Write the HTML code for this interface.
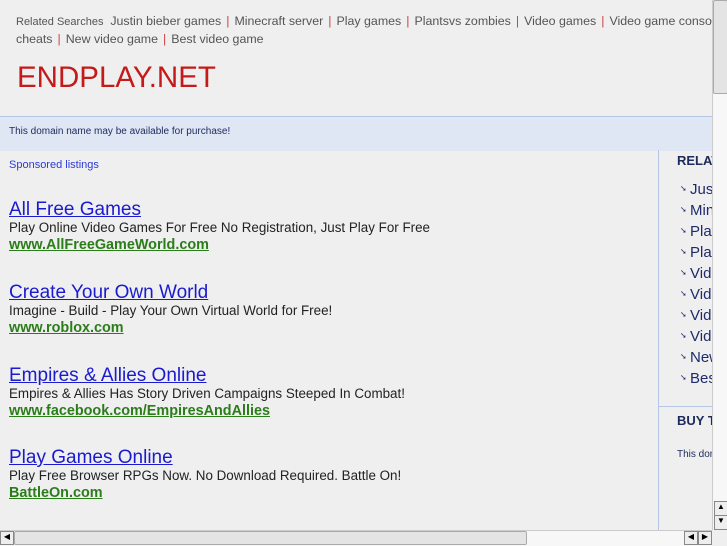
<!DOCTYPE html><html><head><style>
body{margin:0;width:727px;height:545px;overflow:hidden;background:#efefef;font-family:"Liberation Sans",sans-serif;position:relative}
.a{position:absolute;white-space:nowrap}
.rs{color:#555;font-size:12.4px}
.sep{color:#c44;margin:0 5px}
.t{font-size:19px;color:#1a1ad0;text-decoration:underline}
.d{font-size:13.4px;color:#222}
.u{font-size:14.4px;color:#2b7d1a;font-weight:bold;text-decoration:underline}
.r{font-size:15px;color:#1d2a6b;left:690px}
.ar{position:absolute;left:680px;font-size:8px;color:#1d2a6b}
</style></head><body>
<div class="a rs" style="left:16px;top:14px"><span style="font-size:11px">Related Searches</span> &nbsp;Justin bieber games<span class="sep">|</span>Minecraft server<span class="sep">|</span>Play games<span class="sep">|</span>Plantsvs zombies<span class="sep">|</span>Video games<span class="sep">|</span>Video game console</div>
<div class="a rs" style="left:16px;top:32px">cheats<span class="sep">|</span>New video game<span class="sep">|</span>Best video game</div>
<div class="a" style="left:17px;top:61px;font-size:29.5px;color:#c41a1a">ENDPLAY.NET</div>
<div class="a" style="left:0;top:116px;width:712px;height:34px;background:#dfe6f4;border-top:1px solid #b5c6e6"></div>
<div class="a" style="left:9px;top:126px;font-size:10px;color:#1d2a5b">This domain name may be available for purchase!</div>
<div class="a" style="left:9px;top:159px;font-size:11px;color:#2a3ad8">Sponsored listings</div>
<div class="a" style="left:658px;top:150px;width:1px;height:380px;background:#b5c6e6"></div>
<div class="a" style="left:658px;top:406px;width:54px;height:1px;background:#b5c6e6"></div>
<div class="a" style="left:677px;top:153px;font-size:13px;font-weight:bold;color:#1d2a5b">RELATED</div>
<div class="a" style="left:677px;top:413px;font-size:13px;font-weight:bold;color:#1d2a5b">BUY THIS</div>
<div class="a" style="left:677px;top:449px;font-size:10px;color:#1d2a5b">This domain</div>
<div class="a r" style="top:181px">Justin</div><div class="a r" style="top:202px">Minecraft</div><div class="a r" style="top:223px">Play</div><div class="a r" style="top:244px">Plants</div><div class="a r" style="top:265px">Video</div><div class="a r" style="top:286px">Video</div><div class="a r" style="top:307px">Video</div><div class="a r" style="top:328px">Video</div><div class="a r" style="top:349px">New</div><div class="a r" style="top:370px">Best</div>
<div class="ar" style="top:184px">➘</div><div class="ar" style="top:205px">➘</div><div class="ar" style="top:226px">➘</div><div class="ar" style="top:247px">➘</div><div class="ar" style="top:268px">➘</div><div class="ar" style="top:289px">➘</div><div class="ar" style="top:310px">➘</div><div class="ar" style="top:331px">➘</div><div class="ar" style="top:352px">➘</div><div class="ar" style="top:373px">➘</div>
<div class="a t" style="left:9px;top:199px">All Free Games</div>
<div class="a d" style="left:9px;top:220px">Play Online Video Games For Free No Registration, Just Play For Free</div>
<div class="a u" style="left:9px;top:237px">www.AllFreeGameWorld.com</div>
<div class="a t" style="left:9px;top:282px">Create Your Own World</div>
<div class="a d" style="left:9px;top:303px">Imagine - Build - Play Your Own Virtual World for Free!</div>
<div class="a u" style="left:9px;top:320px">www.roblox.com</div>
<div class="a t" style="left:9px;top:365px">Empires &amp; Allies Online</div>
<div class="a d" style="left:9px;top:386px">Empires &amp; Allies Has Story Driven Campaigns Steeped In Combat!</div>
<div class="a u" style="left:9px;top:403px">www.facebook.com/EmpiresAndAllies</div>
<div class="a t" style="left:9px;top:447px">Play Games Online</div>
<div class="a d" style="left:9px;top:468px">Play Free Browser RPGs Now. No Download Required. Battle On!</div>
<div class="a u" style="left:9px;top:485px">BattleOn.com</div>
<div class="a" style="left:712px;top:0;width:15px;height:530px;background:#f7f7f7;border-left:1px solid #ccc"></div>
<div class="a" style="left:713px;top:0;width:13px;height:92px;background:#e4e4e4;border:1px solid #aaa;border-radius:2px"></div>
<div class="a" style="left:714px;top:501px;width:12px;height:13px;border:1px solid #888;background:#eee;font-size:8px;text-align:center">▲</div>
<div class="a" style="left:714px;top:515px;width:12px;height:13px;border:1px solid #888;background:#eee;font-size:8px;text-align:center">▼</div>
<div class="a" style="left:0;top:530px;width:712px;height:15px;background:#f7f7f7;border-top:1px solid #ccc"></div>
<div class="a" style="left:14px;top:531px;width:511px;height:12px;background:#e4e4e4;border:1px solid #aaa;border-radius:2px"></div>
<div class="a" style="left:0;top:531px;width:12px;height:12px;border:1px solid #888;background:#eee;font-size:8px;text-align:center">◀</div>
<div class="a" style="left:684px;top:531px;width:12px;height:12px;border:1px solid #888;background:#eee;font-size:8px;text-align:center">◀</div>
<div class="a" style="left:698px;top:531px;width:12px;height:12px;border:1px solid #888;background:#eee;font-size:8px;text-align:center">▶</div>
</body></html>
